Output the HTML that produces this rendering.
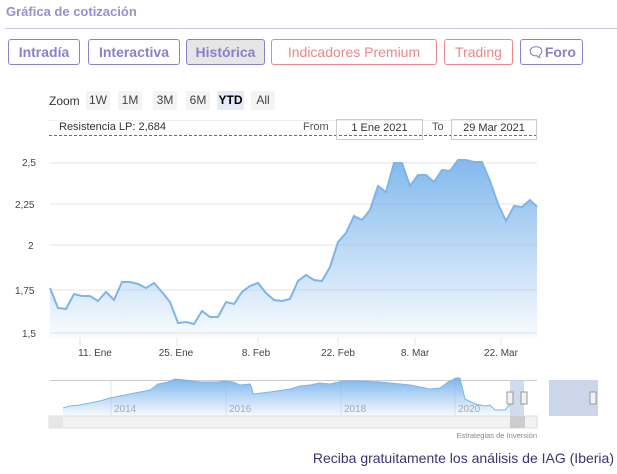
<!DOCTYPE html>
<html><head><meta charset="utf-8"><style>
body{margin:0;width:617px;height:474px;background:#fff;font-family:"Liberation Sans",sans-serif;position:relative;overflow:hidden}
.t{position:absolute;left:6px;top:4px;font-size:13px;font-weight:bold;color:#9a8fcf}
.hr{position:absolute;left:5px;right:0;top:28px;border-top:1px solid #c9c3e6}
.b{position:absolute;top:39px;height:26px;box-sizing:border-box;border:1px solid #8a80c8;border-radius:3px;font-size:14px;font-weight:bold;color:#8a80c8;line-height:24px;text-align:center;white-space:nowrap}
.r{border-color:#e8888a;color:#e8888a;font-weight:normal}
.z{position:absolute;top:91px;height:19px;line-height:19px;font-size:12px;color:#444;background:#f4f4f4;text-align:center;width:24px}
.s{position:absolute;font-size:11px;color:#333;white-space:nowrap}
</style></head><body>
<div class="t">Gráfica de cotización</div><div class="hr"></div>
<div class="b" style="left:8px;width:72px">Intradía</div>
<div class="b" style="left:88px;width:92px">Interactiva</div>
<div class="b" style="left:186px;width:79px;background:#e6e6e6">Histórica</div>
<div class="b r" style="left:271px;width:166px">Indicadores Premium</div>
<div class="b r" style="left:444px;width:69px">Trading</div>
<div class="b" style="left:520px;width:63px">&#x1F5E8;Foro</div>
<div class="s" style="left:49px;top:94px;font-size:12px">Zoom</div>
<div class="z" style="left:86px">1W</div><div class="z" style="left:118px">1M</div><div class="z" style="left:153px">3M</div><div class="z" style="left:186px">6M</div>
<div class="z" style="left:217px;width:27px;background:#e6ebf5;font-weight:bold;color:#000">YTD</div><div class="z" style="left:251px">All</div>
<div style="position:absolute;left:49px;top:120px;width:488px;height:14px;border-bottom:1px dashed #2a9a2a;border-top:1px solid #eee"></div>
<div class="s" style="left:59px;top:121px">Resistencia LP: 2,684</div>
<div class="s" style="left:303px;top:121px;color:#555">From</div>
<div class="s" style="left:336px;top:119px;width:85px;height:19px;border:1px solid #ccc;text-align:center;line-height:17px">1 Ene 2021</div>
<div class="s" style="left:432px;top:121px;color:#555">To</div>
<div class="s" style="left:451px;top:119px;width:84px;height:19px;border:1px solid #ccc;text-align:center;line-height:17px">29 Mar 2021</div>
<svg style="position:absolute;left:0;top:0" width="617" height="474">
<defs><linearGradient id="g" x1="0" y1="0" x2="0" y2="1"><stop offset="0" stop-color="#7cb5ec" stop-opacity=".95"/><stop offset="1" stop-color="#7cb5ec" stop-opacity=".05"/></linearGradient>
<linearGradient id="g2" x1="0" y1="0" x2="0" y2="1"><stop offset="0" stop-color="#7cb5ec"/><stop offset="1" stop-color="#7cb5ec" stop-opacity=".05"/></linearGradient></defs>
<g stroke="#e6e6e6"><line x1="50" x2="537" y1="163" y2="163"/><line x1="50" x2="537" y1="204" y2="204"/><line x1="50" x2="537" y1="245" y2="245"/><line x1="50" x2="537" y1="290" y2="290"/><line x1="50" x2="537" y1="333" y2="333"/>
<line x1="80" x2="80" y1="338" y2="346"/><line x1="177" x2="177" y1="338" y2="346"/><line x1="258" x2="258" y1="338" y2="346"/><line x1="338" x2="338" y1="338" y2="346"/><line x1="415" x2="415" y1="338" y2="346"/><line x1="501" x2="501" y1="338" y2="346"/></g>
<path d="M50,288L58,308 66,309 74,294 82,296 90,296 98,301 106,292 114,300 122,282 130,282 138,284 146,288 154,283 162,292 170,302 178,323 186,322 194,324 202,311 210,317 218,317 226,302 234,304 242,292 250,286 258,283 266,293 274,300 282,301 290,299 298,281 306,275 314,280 322,281 330,267 338,242 346,233 354,216 362,220 370,210 378,186 386,192 394,163 402,163 410,186 418,175 426,175 434,182 442,170 450,171 458,160 466,160 474,162 482,162 490,181 498,204 506,221 514,206 522,207 530,200 537,207L537,338 50,338Z" fill="url(#g)"/>
<path d="M50,288L58,308 66,309 74,294 82,296 90,296 98,301 106,292 114,300 122,282 130,282 138,284 146,288 154,283 162,292 170,302 178,323 186,322 194,324 202,311 210,317 218,317 226,302 234,304 242,292 250,286 258,283 266,293 274,300 282,301 290,299 298,281 306,275 314,280 322,281 330,267 338,242 346,233 354,216 362,220 370,210 378,186 386,192 394,163 402,163 410,186 418,175 426,175 434,182 442,170 450,171 458,160 466,160 474,162 482,162 490,181 498,204 506,221 514,206 522,207 530,200 537,207" fill="none" stroke="#7cb5ec" stroke-width="2"/>
<g font-size="10" fill="#444" font-family="Liberation Sans"><text x="22" y="166">2,5</text><text x="15" y="208">2,25</text><text x="28" y="249">2</text><text x="15" y="294">1,75</text><text x="22" y="337">1,5</text>
<g text-anchor="middle"><text x="95" y="356">11. Ene</text><text x="176" y="356">25. Ene</text><text x="256" y="356">8. Feb</text><text x="338" y="356">22. Feb</text><text x="415" y="356">8. Mar</text><text x="501" y="356">22. Mar</text></g></g>
<line x1="50" x2="537" y1="380.5" y2="380.5" stroke="#ccc"/>
<g stroke="#e6e6e6"><line x1="111" x2="111" y1="381" y2="416"/><line x1="226" x2="226" y1="381" y2="416"/><line x1="341" x2="341" y1="381" y2="416"/><line x1="455" x2="455" y1="381" y2="416"/></g>
<path d="M63,408L70,406 80,405 90,403 100,401 110,398 120,396 130,394 140,392 150,390 158,384 168,382 175,379 185,380 200,382 218,382 225,381 233,382 240,385 250,384 252,388 253,394 270,392 290,389 300,386 310,385 320,383 330,384 343,381 360,381 380,382 400,384 410,385 420,387 430,389 440,388 448,382 456,378 460,378 465,399 475,404 485,406 490,405 495,410 505,410 512,402 L512,416 63,416Z" fill="url(#g2)"/>
<path d="M63,408L70,406 80,405 90,403 100,401 110,398 120,396 130,394 140,392 150,390 158,384 168,382 175,379 185,380 200,382 218,382 225,381 233,382 240,385 250,384 252,388 253,394 270,392 290,389 300,386 310,385 320,383 330,384 343,381 360,381 380,382 400,384 410,385 420,387 430,389 440,388 448,382 456,378 460,378 465,399 475,404 485,406 490,405 495,410 505,410 512,402" fill="none" stroke="#7cb5ec"/>
<rect x="510" y="380" width="14" height="36" fill="#c5d2ea" opacity=".8"/>
<rect x="507" y="392" width="6" height="12" fill="#f2f2f2" stroke="#999"/><rect x="521" y="392" width="6" height="12" fill="#f2f2f2" stroke="#999"/>
<rect x="549" y="380" width="49" height="36" fill="#ccd6eb"/><rect x="590" y="392" width="6" height="12" fill="#f2f2f2" stroke="#999"/>
<rect x="49" y="416" width="488" height="12" fill="#f2f2f2" stroke="#ddd"/><rect x="49" y="416" width="14" height="12" fill="#e6e6e6"/>
<rect x="510" y="416" width="15" height="12" fill="#ccc"/>
<g font-size="10" fill="#aaa" font-family="Liberation Sans"><text x="114" y="412">2014</text><text x="229" y="412">2016</text><text x="344" y="412">2018</text><text x="458" y="412">2020</text></g>
<text x="537" y="438" font-size="7.5" fill="#888" text-anchor="end" font-family="Liberation Sans">Estrategias de Inversión</text>
</svg>
<div style="position:absolute;right:3px;top:450px;font-size:14px;color:#3b3570">Reciba gratuitamente los análisis de IAG (Iberia)</div>
</body></html>
